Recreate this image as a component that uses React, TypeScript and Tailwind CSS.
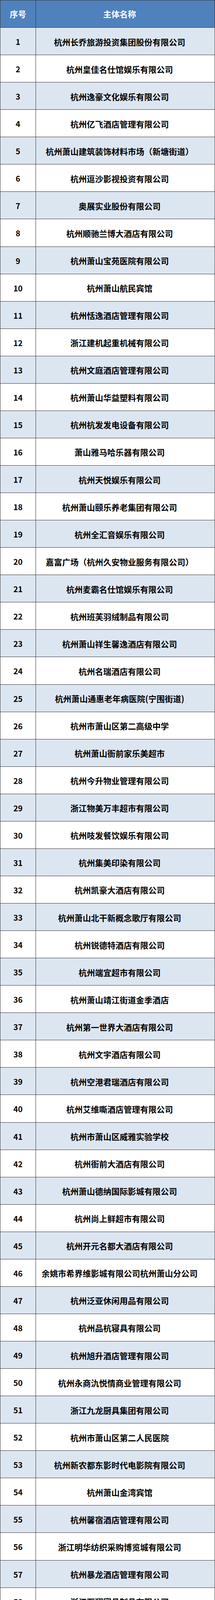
const NAMES = [
  '杭州长乔旅游投资集团股份有限公司',
  '杭州皇佳名仕馆娱乐有限公司',
  '杭州逸豪文化娱乐有限公司',
  '杭州亿飞酒店管理有限公司',
  '杭州萧山建筑装饰材料市场（新塘街道）',
  '杭州逗沙影视投资有限公司',
  '奥展实业股份有限公司',
  '杭州顺驰兰博大酒店有限公司',
  '杭州萧山宝苑医院有限公司',
  '杭州萧山航民宾馆',
  '杭州恬逸酒店管理有限公司',
  '浙江建机起重机械有限公司',
  '杭州文庭酒店管理有限公司',
  '杭州萧山华益塑料有限公司',
  '杭州杭发发电设备有限公司',
  '萧山雅马哈乐器有限公司',
  '杭州天悦娱乐有限公司',
  '杭州萧山颐乐养老集团有限公司',
  '杭州全汇音娱乐有限公司',
  '嘉富广场（杭州久安物业服务有限公司）',
  '杭州麦霸名仕馆娱乐有限公司',
  '杭州班芙羽绒制品有限公司',
  '杭州萧山祥生馨逸酒店有限公司',
  '杭州名瑞酒店有限公司',
  '杭州萧山通惠老年病医院(宁围街道)',
  '杭州市萧山区第二高级中学',
  '杭州萧山衙前家乐美超市',
  '杭州今升物业管理有限公司',
  '浙江物美万丰超市有限公司',
  '杭州吱发餐饮娱乐有限公司',
  '杭州集美印染有限公司',
  '杭州凯豪大酒店有限公司',
  '杭州萧山北干新概念歌厅有限公司',
  '杭州锐德特酒店有限公司',
  '杭州端宜超市有限公司',
  '杭州萧山靖江街道金季酒店',
  '杭州第一世界大酒店有限公司',
  '杭州文宇酒店有限公司',
  '杭州空港君瑞酒店有限公司',
  '杭州艾维嘶酒店管理有限公司',
  '杭州市萧山区威雅实验学校',
  '杭州衙前大酒店有限公司',
  '杭州萧山德纳国际影城有限公司',
  '杭州尚上鲜超市有限公司',
  '杭州开元名都大酒店有限公司',
  '余姚市希界维影城有限公司杭州萧山分公司',
  '杭州泛亚休闲用品有限公司',
  '杭州品杭寝具有限公司',
  '杭州旭升酒店管理有限公司',
  '杭州永商氿悦情商业管理有限公司',
  '浙江九龙厨具集团有限公司',
  '杭州市萧山区第二人民医院',
  '杭州新农都东影时代电影院有限公司',
  '杭州萧山金湾宾馆',
  '杭州馨宿酒店管理有限公司',
  '浙江明华纺织采购博览城有限公司',
  '杭州暴龙酒店管理有限公司',
  '浙江万翔寝具制品有限公司',
  '杭州物美竞宁百货有限公司第一分公司',
  '杭州余鸿酒店有限公司',
  '杭州义中酒店管理有限公司',
  '杭州山姆会员商店有限公司萧山分店',
  '杭州麦嘉娱乐管理有限公司',
  '杭州枫景假日酒店有限公司',
  '杭州萧山美信装饰布厂',
  '杭州永丰羽绒制品有限公司',
  '杭州萧山临浦镇祥发客房',
  '杭州娃哈哈酒店管理有限公司',
  '浙江汇德隆家电有限公司萧山家电超市',
  '杭州市萧山区第一中等职业学校',
]

// every row (header too) is one 70px band with a 1px rule at its foot
function Row({ no, name, shaded }: { no: number; name: string; shaded: boolean }) {
  return (
    <div className={`box-border flex h-[70.07px] overflow-hidden border-b border-[#333] ${shaded ? 'bg-[#dce6f1]' : 'bg-white'}`}>
      <div className="flex w-[91px] shrink-0 items-center justify-center border-r border-[#333] pt-[3px] text-[20px] font-bold text-black">
        {no}
      </div>
      <div className="flex min-w-0 flex-1 items-center justify-center whitespace-nowrap pr-[29px] pt-[3px] text-[21px] font-bold text-black">
        {name}
      </div>
    </div>
  )
}

export default function App() {
  return (
    <div className="w-[550px] border-x border-t border-[#333] font-['Noto_Sans_CJK_SC',sans-serif] leading-none">
      <div className="box-border flex h-[70px] border-b border-[#333] bg-[#4f81bd] text-[21px] font-bold text-white">
        <div className="flex w-[91px] shrink-0 items-center justify-center border-r border-[#333]">序号</div>
        <div className="flex flex-1 items-center justify-center pr-[29px]">主体名称</div>
      </div>
      {NAMES.map((name, i) => (
        <Row key={i} no={i + 1} name={name} shaded={i % 2 === 0} />
      ))}
    </div>
  )
}
